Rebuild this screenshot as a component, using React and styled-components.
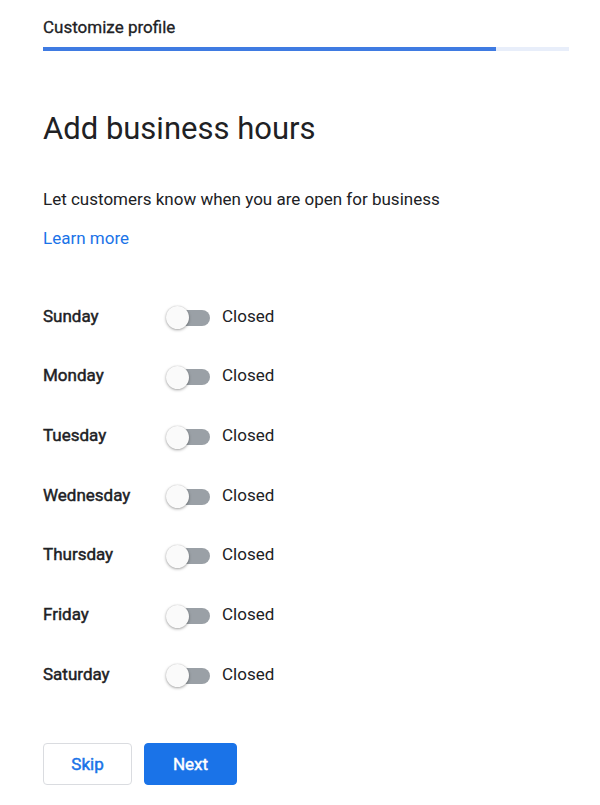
import React from "react";
import styled, { createGlobalStyle } from "styled-components";

const Global = createGlobalStyle`
  html, body { margin: 0; padding: 0; background: #ffffff; }
  body { font-family: Roboto, "Liberation Sans", Arial, sans-serif; color: #202124; }
  * { box-sizing: border-box; }
`;

const Page = styled.div`
  width: 600px;
  padding: 17px 31px 0 43px;
  display: flex;
  flex-direction: column;
`;

const StepTitle = styled.div`
  font-size: 17px;
  line-height: 20px;
  font-weight: 400;
  -webkit-text-stroke: 0.3px #202124;
  color: #202124;
`;

const Progress = styled.div`
  margin-top: 10px;
  height: 4px;
  background: #e8eefa;
  display: flex;
`;

const ProgressFill = styled.div`
  height: 100%;
  background: #3f7be2;
`;

const Title = styled.h1`
  margin: 60px 0 0;
  font-size: 31px;
  line-height: 36px;
  font-weight: 400;
  color: #202124;
`;

const Subtitle = styled.p`
  margin: 40px 0 0;
  font-size: 17px;
  line-height: 24px;
  color: #202124;
`;

const LearnMore = styled.a`
  margin-top: 15px;
  font-size: 17px;
  line-height: 24px;
  color: #1a73e8;
  text-decoration: none;
  align-self: flex-start;
`;

const Days = styled.div`
  margin-top: 36px;
  display: flex;
  flex-direction: column;
`;

const Row = styled.div`
  height: 59.67px;
  display: flex;
  align-items: center;
`;

const DayName = styled.div`
  width: 122px;
  font-size: 17px;
  line-height: 24px;
  font-weight: 400;
  -webkit-text-stroke: 0.45px #202124;
  color: #202124;
`;

const Switch = styled.span`
  position: relative;
  width: 45px;
  height: 23px;
  margin-top: 4px;
  display: flex;
  align-items: center;
  justify-content: flex-end;
`;

const Track = styled.span`
  width: 39px;
  height: 16px;
  border-radius: 8px;
  background: ${(p) => (p.$on ? "#8ab4f8" : "#9aa0a6")};
`;

const Thumb = styled.span`
  position: absolute;
  left: 1px;
  top: 0;
  width: 23px;
  height: 23px;
  border-radius: 50%;
  background: #fafafa;
  box-shadow: 0 1px 3px rgba(0, 0, 0, 0.35), 0 0 1px rgba(0, 0, 0, 0.2);
`;

const Status = styled.div`
  margin-left: 12px;
  font-size: 17px;
  line-height: 24px;
  color: #202124;
`;

const Actions = styled.div`
  margin-top: 39px;
  display: flex;
  gap: 12px;
`;

const Button = styled.button`
  height: 42px;
  width: ${(p) => p.$w}px;
  border-radius: 4px;
  font-family: Roboto, "Liberation Sans", Arial, sans-serif;
  font-size: 17px;
  font-weight: 400;
  -webkit-text-stroke: 0.45px currentColor;
  cursor: pointer;
  border: 1px solid ${(p) => (p.$primary ? "#1a73e8" : "#dadce0")};
  background: ${(p) => (p.$primary ? "#1a73e8" : "#ffffff")};
  color: ${(p) => (p.$primary ? "#ffffff" : "#1a73e8")};
`;

const days = ["Sunday", "Monday", "Tuesday", "Wednesday", "Thursday", "Friday", "Saturday"];

export default function App() {
  return (
    <>
      <Global />
      <Page>
        <StepTitle>Customize profile</StepTitle>
        <Progress>
          <ProgressFill style={{ width: `${(453 / 526) * 100}%` }} />
        </Progress>
        <Title>Add business hours</Title>
        <Subtitle>Let customers know when you are open for business</Subtitle>
        <LearnMore href="#">Learn more</LearnMore>
        <Days>
          {days.map((d) => (
            <Row key={d}>
              <DayName>{d}</DayName>
              <Switch>
                <Track />
                <Thumb />
              </Switch>
              <Status>Closed</Status>
            </Row>
          ))}
        </Days>
        <Actions>
          <Button $w={89}>Skip</Button>
          <Button $w={93} $primary>Next</Button>
        </Actions>
      </Page>
    </>
  );
}
